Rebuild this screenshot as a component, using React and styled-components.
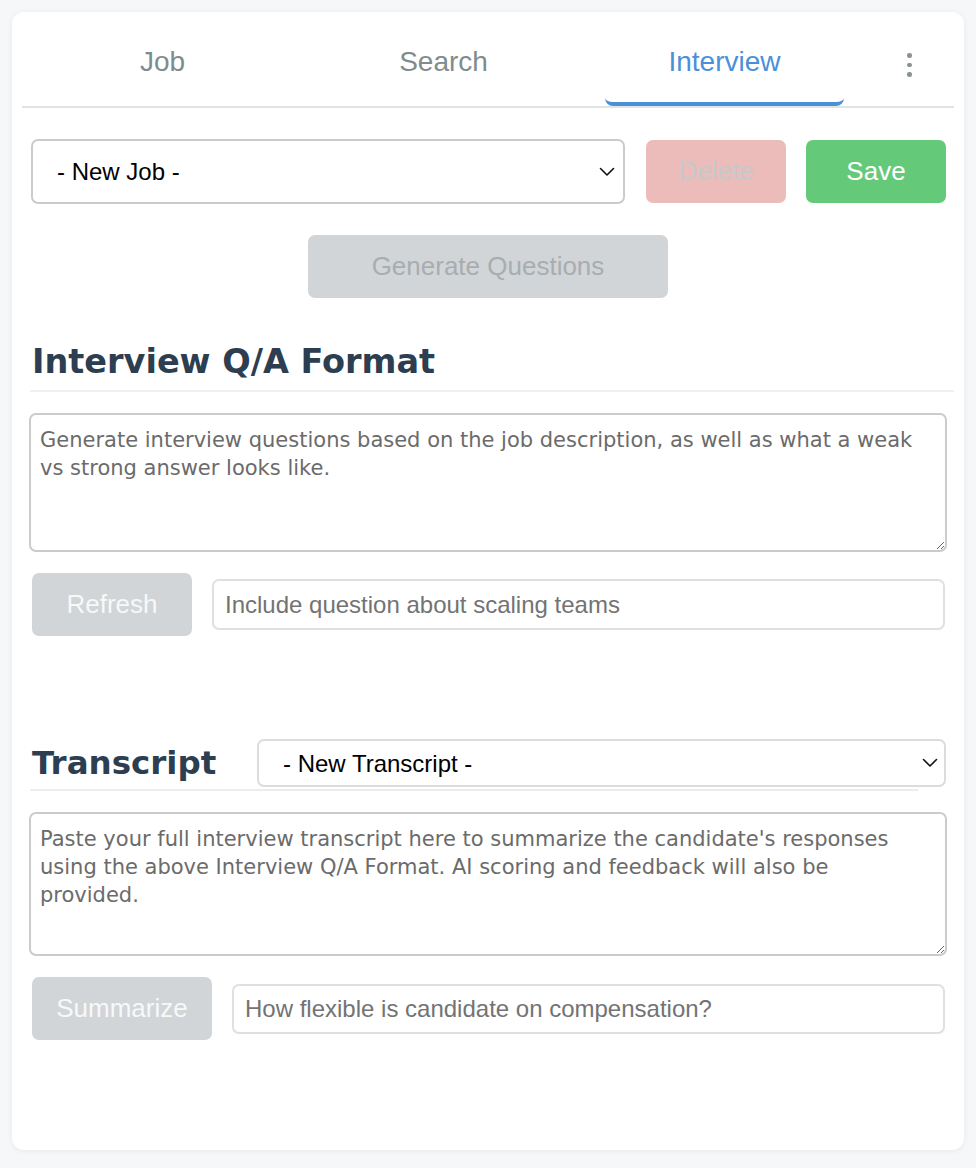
import React from "react";
import styled, { createGlobalStyle } from "styled-components";

const Global = createGlobalStyle`
  * { box-sizing: border-box; }
  html, body { margin: 0; padding: 0; background: #f6f7f9; }
  body { font-family: "Liberation Sans", Arial, sans-serif; }
`;

const Page = styled.div`
  padding: 12px;
`;

const Card = styled.div`
  background: #fff;
  border-radius: 12px;
  box-shadow: 0 1px 6px rgba(0, 0, 0, 0.06);
  padding: 10px 10px 0;
  min-height: 1138px;
`;

const TabBar = styled.div`
  display: flex;
  border-bottom: 2px solid #e2e4e4;
`;

const Tab = styled.div`
  flex: 1;
  margin: 0 21px 0 21px;
  height: 84px;
  display: flex;
  align-items: center;
  justify-content: center;
  font-size: 28px;
  color: ${(p) => (p.$active ? "#4a90d9" : "#7f8c8d")};
  border-bottom: 4px solid ${(p) => (p.$active ? "#4a90d9" : "transparent")};
  border-radius: 0 0 8px 8px;
`;

const Kebab = styled.div`
  width: 89px;
  flex-shrink: 0;
  height: 84px;
  display: flex;
  flex-direction: column;
  align-items: center;
  justify-content: center;
  gap: 5px;
  padding-top: 2px;
`;

const Dot = styled.span`
  width: 4.5px;
  height: 4.5px;
  border-radius: 50%;
  background: #8a9191;
`;

const JobRow = styled.div`
  display: flex;
  align-items: center;
  margin: 31px 8px 0 9px;
`;

const SelectWrap = styled.div`
  position: relative;
  flex: 1;
  height: ${(p) => p.$h}px;
`;

const Select = styled.select`
  appearance: none;
  -webkit-appearance: none;
  width: 100%;
  height: 100%;
  border: 2px solid ${(p) => p.$border};
  border-radius: 7px;
  background: #fff;
  padding: 0 40px 0 24px;
  font-family: "Liberation Sans", Arial, sans-serif;
  font-size: 24px;
  color: #000;
  outline: none;
`;

const Chevron = styled.svg`
  position: absolute;
  right: ${(p) => p.$right}px;
  top: 50%;
  transform: translateY(-50%);
  pointer-events: none;
`;

const Button = styled.button`
  height: 63px;
  width: ${(p) => p.$w}px;
  flex-shrink: 0;
  border: none;
  border-radius: 7px;
  background: ${(p) => p.$bg};
  color: ${(p) => p.$fg};
  font-family: "Liberation Sans", Arial, sans-serif;
  font-size: 26px;
  margin-left: ${(p) => p.$ml || 0}px;
  padding: 0;
`;

const Center = styled.div`
  display: flex;
  justify-content: center;
  margin-top: 31px;
`;

const Heading = styled.h2`
  margin: 0;
  padding-left: 2px;
  font-family: "DejaVu Sans", Verdana, sans-serif;
  font-weight: bold;
  font-size: 33.5px;
  line-height: 40px;
  color: #2c3e50;
`;

const SectionHead = styled.div`
  margin: 44px 0 0 8px;
  padding-bottom: 8px;
  border-bottom: 2px solid #eef1f1;
`;

const TranscriptHead = styled.div`
  display: flex;
  align-items: center;
  margin: 103px 36px 0 8px;
  padding-bottom: 2px;
  border-bottom: 2px solid #ebeded;
`;

const HeadTitle = styled(Heading)`
  width: 227px;
  flex-shrink: 0;
  font-size: 32.5px;
`;

const TranscriptSelect = styled(SelectWrap)`
  margin-right: -28px;
`;

const TextArea = styled.textarea`
  display: block;
  width: calc(100% - 14px);
  margin: 21px 7px 0;
  height: ${(p) => p.$h}px;
  border: 2px solid #cbcbcb;
  border-radius: 7px;
  padding: 11px 16px 10px 9px;
  font-family: "DejaVu Sans", Verdana, sans-serif;
  font-size: 21px;
  line-height: 28px;
  color: #333;
  resize: vertical;
  outline: none;
  &::placeholder { color: #6b6b6b; }
`;

const ActionRow = styled.div`
  display: flex;
  align-items: center;
  margin: 21px 9px 0 10px;
`;

const Input = styled.input`
  flex: 1;
  height: ${(p) => p.$h}px;
  margin-left: 20px;
  border: 2px solid #e0e0e0;
  border-radius: 7px;
  padding: 0 ${(p) => p.$pl}px;
  font-family: "Liberation Sans", Arial, sans-serif;
  font-size: 24px;
  outline: none;
  &::placeholder { color: #737373; }
`;

const ChevronIcon = ({ right }) => (
  <Chevron $right={right} width="16" height="10" viewBox="0 0 16 10">
    <path d="M1.5 1.5 L8 8 L14.5 1.5" fill="none" stroke="#111" strokeWidth="1.6" strokeLinecap="round" strokeLinejoin="round" />
  </Chevron>
);

export default function App() {
  return (
    <>
      <Global />
      <Page>
        <Card>
          <TabBar>
            <Tab>Job</Tab>
            <Tab>Search</Tab>
            <Tab $active>Interview</Tab>
            <Kebab>
              <Dot />
              <Dot />
              <Dot />
            </Kebab>
          </TabBar>

          <JobRow>
            <SelectWrap $h={65}>
              <Select $border="#cbcbcb" defaultValue="new">
                <option value="new">- New Job -</option>
              </Select>
              <ChevronIcon right={10} />
            </SelectWrap>
            <Button $w={140} $bg="#ebbcb9" $fg="#c6c9c9" $ml={21}>Delete</Button>
            <Button $w={140} $bg="#65c97a" $fg="#ffffff" $ml={20}>Save</Button>
          </JobRow>

          <Center>
            <Button $w={360} $bg="#d1d5d8" $fg="#a8adb0">Generate Questions</Button>
          </Center>

          <SectionHead>
            <Heading>Interview Q/A Format</Heading>
          </SectionHead>

          <TextArea
            $h={139}
            placeholder="Generate interview questions based on the job description, as well as what a weak vs strong answer looks like."
          />

          <ActionRow>
            <Button $w={160} $bg="#d1d5d8" $fg="#f7f8f8">Refresh</Button>
            <Input $h={51} $pl={11} placeholder="Include question about scaling teams" />
          </ActionRow>

          <TranscriptHead>
            <HeadTitle>Transcript</HeadTitle>
            <TranscriptSelect $h={48}>
              <Select $border="#dcdcdc" defaultValue="new">
                <option value="new">- New Transcript -</option>
              </Select>
              <ChevronIcon right={8} />
            </TranscriptSelect>
          </TranscriptHead>

          <TextArea
            $h={144}
            placeholder="Paste your full interview transcript here to summarize the candidate's responses using the above Interview Q/A Format. AI scoring and feedback will also be provided."
          />

          <ActionRow>
            <Button $w={180} $bg="#d1d5d8" $fg="#f7f8f8">Summarize</Button>
            <Input $h={50} $pl={11} placeholder="How flexible is candidate on compensation?" />
          </ActionRow>
        </Card>
      </Page>
    </>
  );
}
